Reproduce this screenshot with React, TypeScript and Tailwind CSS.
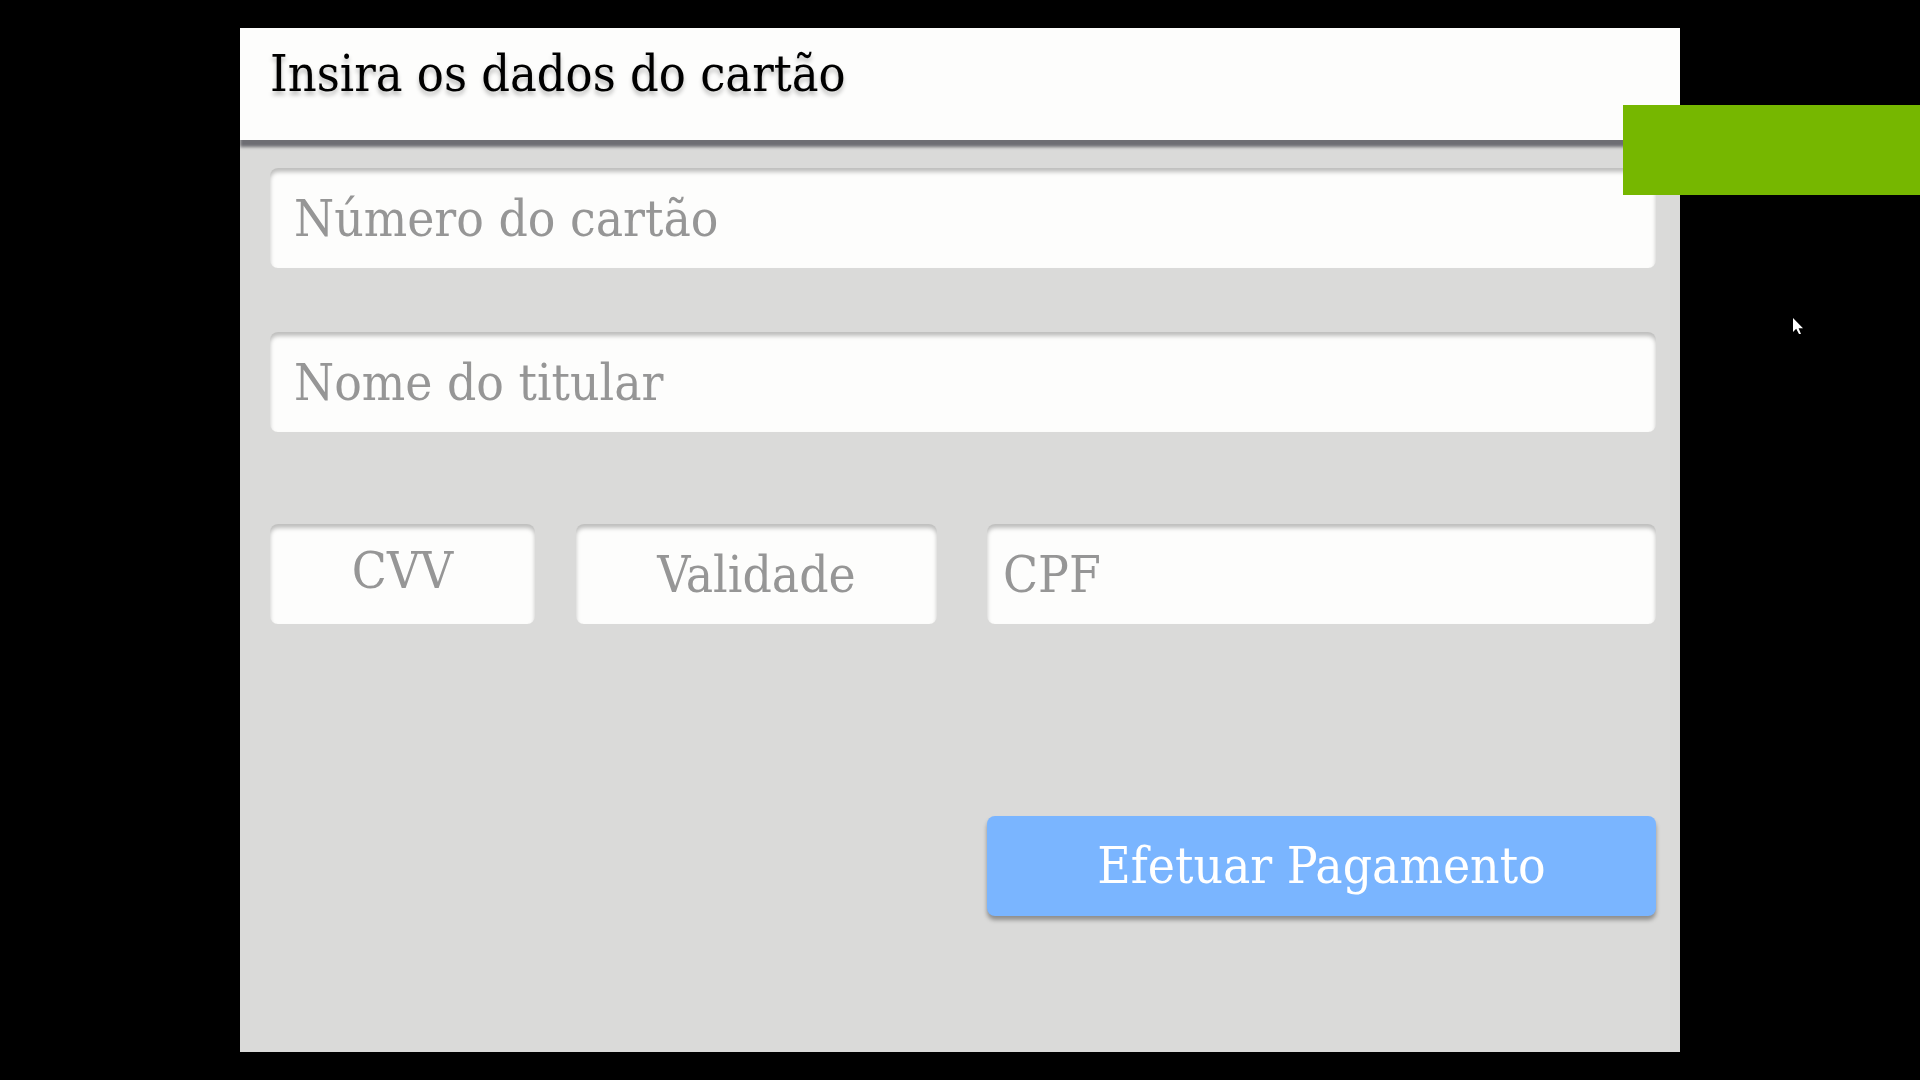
import type { InputHTMLAttributes } from "react";

interface FieldProps extends InputHTMLAttributes<HTMLInputElement> {
  label: string;
}

function Field({ label, className = "", ...rest }: FieldProps) {
  return (
    <input
      type="text"
      aria-label={label}
      placeholder={label}
      className={`block h-[100px] w-full min-w-0 rounded-lg bg-[#fdfdfc] text-[51px] text-neutral-800 shadow-[inset_0_4px_4px_rgba(0,0,0,0.25)] outline-none placeholder:text-[#969696] placeholder:opacity-100 ${className}`}
      {...rest}
    />
  );
}

export default function App() {
  return (
    <div className="relative flex min-h-screen justify-center overflow-hidden bg-black py-7 font-['DejaVu_Serif_Condensed','DejaVu_Serif',serif]">
      <main className="flex w-3/4 flex-col bg-[#dadad9]">
        <header className="h-28 bg-[#fdfdfc] px-[30px] pt-4 shadow-[0_7px_3px_rgba(50,50,60,0.65)] [clip-path:inset(0_0_-16px_0)]">
          <h1 className="text-[50px] leading-[60px] whitespace-nowrap text-black [text-shadow:0_4px_4px_rgba(0,0,0,0.25)]">
            Insira os dados do cartão
          </h1>
        </header>

        <form
          className="grid grid-cols-[265fr_41fr_361fr_50fr_669fr] pt-7 pr-6 pb-8 pl-[30px]"
          onSubmit={(e) => e.preventDefault()}
        >
          <Field label="Número do cartão" name="number" className="col-span-5 px-6" />
          <Field label="Nome do titular" name="holder" className="col-span-5 mt-16 px-6" />
          <Field label="CVV" name="cvv" className="col-start-1 mt-[92px] px-2 pb-2 text-center" />
          <Field label="Validade" name="expiry" className="col-start-3 mt-[92px] px-2 text-center" />
          <Field label="CPF" name="cpf" className="col-start-5 mt-[92px] px-4" />
          <button
            type="submit"
            className="col-start-5 mt-48 h-[100px] rounded-lg bg-[#7ab5ff] text-[51px] whitespace-nowrap text-white shadow-[0_4px_4px_rgba(0,0,0,0.35)]"
          >
            Efetuar Pagamento
          </button>
        </form>
      </main>

      <div className="absolute top-[105px] right-0 h-[90px] w-[297px] bg-[#76b700]" />

      <svg
        className="absolute top-[318px] left-[1793px]"
        width="11"
        height="17"
        viewBox="0 0 11 17"
        fill="#fff"
        aria-hidden="true"
      >
        <path d="M0 0v14l3.2-3.2L6 16h2L5.6 10.2H10z" />
      </svg>
    </div>
  );
}
